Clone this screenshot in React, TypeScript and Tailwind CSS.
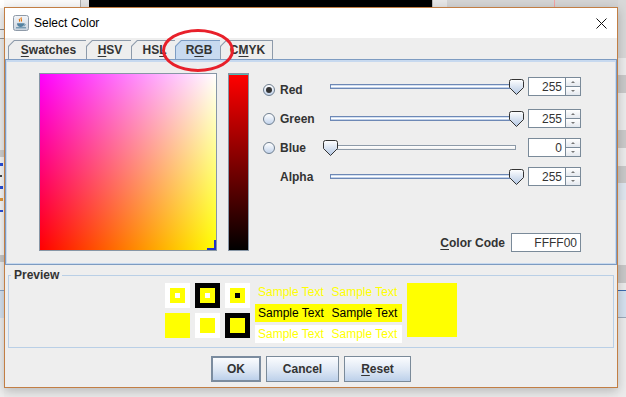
import React from 'react';

type Channel = { label: string; value: number; radio: boolean; checked?: boolean; gap: string; lift?: boolean };

const channels: Channel[] = [
  { label: 'Red', value: 255, radio: true, checked: true, gap: '', lift: true },
  { label: 'Green', value: 255, radio: true, gap: 'mt-[13px]' },
  { label: 'Blue', value: 0, radio: true, gap: 'mt-[10px]' },
  { label: 'Alpha', value: 255, radio: false, gap: 'mt-[10px]' },
];

const tabs = [
  { pre: '', key: 'S', post: 'watches', width: 'w-[78px]' },
  { pre: '', key: 'H', post: 'SV', width: 'w-[45px]' },
  { pre: 'HS', key: 'L', post: '', width: 'w-[44px]' },
  { pre: 'R', key: 'G', post: 'B', width: 'w-[45px]', active: true },
  { pre: 'C', key: 'M', post: 'YK', width: 'w-[53px]', last: true },
];

const TRACK = 186;

function JavaIcon() {
  return (
    <svg width="16" height="16" viewBox="0 0 16 16">
      <defs>
        <linearGradient id="ji" x1="0" y1="0" x2="0" y2="1">
          <stop offset="0" stopColor="#f4f6f9" />
          <stop offset="1" stopColor="#c9d2dd" />
        </linearGradient>
      </defs>
      <rect x="0.5" y="0.5" width="15" height="15" rx="2" fill="url(#ji)" stroke="#8e9aa8" />
      <path d="M8.5 2.5c-2 1.5 1.5 2.2-0.5 4M6.6 3.8c-1.2 1 1 1.4-0.3 2.7" stroke="#e76f00" strokeWidth="1.1" fill="none" />
      <path d="M4 8.2h7.2c0 2.6-1.4 3.8-3.6 3.8S4 10.8 4 8.2z" fill="#5382a1" />
      <path d="M11 8.8c1.6 0 1.6 2-0.4 2.2" stroke="#5382a1" strokeWidth="0.9" fill="none" />
      <path d="M3 12.8h10" stroke="#5382a1" strokeWidth="1" />
    </svg>
  );
}

function CloseGlyph() {
  return (
    <svg width="11" height="11" viewBox="0 0 11 11">
      <path d="M0.5 0.5L10.5 10.5M10.5 0.5L0.5 10.5" stroke="#111" strokeWidth="1" />
    </svg>
  );
}

function Thumb() {
  return (
    <svg width="15" height="16" viewBox="0 0 15 16">
      <defs>
        <linearGradient id="th" x1="0" y1="0" x2="0" y2="1">
          <stop offset="0" stopColor="#ffffff" />
          <stop offset="1" stopColor="#b3c7e3" />
        </linearGradient>
      </defs>
      <path d="M0.5 2.5Q0.5 0.5 2.5 0.5H12.5Q14.5 0.5 14.5 2.5V8.5L7.5 15.5L0.5 8.5Z" fill="url(#th)" stroke="#333" />
    </svg>
  );
}

function Radio({ checked }: { checked?: boolean }) {
  return (
    <div className="w-[12px] h-[12px] rounded-full border border-[#6f7f90] bg-[linear-gradient(#ffffff,#c3d4ec)] flex items-center justify-center">
      {checked && <div className="w-[6px] h-[6px] rounded-full bg-[#333333]" />}
    </div>
  );
}

function Slider({ value }: { value: number }) {
  const filled = value > 0;
  return (
    <div className="relative w-[200px] h-[19px]">
      <div
        className={`absolute left-[7px] right-[7px] top-[7px] h-[5px] border ${
          filled
            ? 'border-[#6d88b5] bg-[linear-gradient(#bcd0ec,#ffffff_50%,#9fb8de)]'
            : 'border-[#8d9aa8] bg-[linear-gradient(#ffffff,#f1f1f1)]'
        }`}
      />
      <div className="absolute top-[2px]" style={{ left: Math.round((value / 255) * TRACK) }}>
        <Thumb />
      </div>
    </div>
  );
}

function Spinner({ value }: { value: number }) {
  return (
    <div className="flex h-[19px]">
      <div className="w-[38px] h-full border border-[#7a8a99] bg-white flex items-center justify-end pr-[3px] text-[12px] text-[#333333]">
        {value}
      </div>
      <div className="w-[15px] h-full flex flex-col">
        <div className="h-[10px] border-y border-r border-[#7a8a99] bg-[linear-gradient(#ffffff,#e4e8ee)] flex items-center justify-center">
          <div className="w-0 h-0 border-x-[2px] border-x-transparent border-b-[2px] border-b-[#777777]" />
        </div>
        <div className="h-[9px] border-b border-r border-[#7a8a99] bg-[linear-gradient(#ffffff,#e4e8ee)] flex items-center justify-center">
          <div className="w-0 h-0 border-x-[2px] border-x-transparent border-t-[2px] border-t-[#777777]" />
        </div>
      </div>
    </div>
  );
}

function SampleRow({ tone }: { tone: 'plain' | 'fill' | 'white' }) {
  const cls =
    tone === 'fill'
      ? 'bg-[#ffff00] text-black'
      : tone === 'white'
        ? 'bg-white text-[#ffff00]'
        : 'text-[#ffff00]';
  return (
    <div className={`flex h-[18px] items-center text-[12px] ${cls}`}>
      <span className="w-[73.5px] px-[3px] whitespace-nowrap">Sample Text</span>
      <span className="w-[73.5px] px-[3px] whitespace-nowrap">Sample Text</span>
    </div>
  );
}

function Swatch({ outer, inner, dot }: { outer: string; inner?: string; dot?: string }) {
  return (
    <div className={`w-[25px] h-[25px] flex items-center justify-center ${outer}`}>
      {inner && (
        <div className={`w-[15px] h-[15px] flex items-center justify-center ${inner}`}>
          {dot && <div className={`w-[5px] h-[5px] ${dot}`} />}
        </div>
      )}
    </div>
  );
}

function Button({ label, mnemonic, width, primary }: { label: string; mnemonic?: number; width: string; primary?: boolean }) {
  return (
    <button
      className={`${width} h-[26px] flex items-center justify-center text-[12px] font-bold text-[#333333] bg-[linear-gradient(#fbfcfe,#dde7f4_55%,#bcd0ea)] ${
        primary ? 'border-2 border-[#7b8c9f]' : 'border border-[#7a8a99]'
      }`}
    >
      {mnemonic === undefined ? (
        label
      ) : (
        <span>
          <span className="underline underline-offset-2">{label[mnemonic]}</span>
          {label.slice(mnemonic + 1)}
        </span>
      )}
    </button>
  );
}

function Desktop() {
  return (
    <>
      {/* top strip */}
      <div className="absolute left-0 top-0 w-[80px] h-[8px] bg-[#fafafa]" />
      <div className="absolute left-[80px] top-0 w-[1px] h-[8px] bg-[#a8a8a8]" />
      <div className="absolute left-[81px] top-0 w-[8px] h-[8px] bg-[#e2e2e2]" />
      <div className="absolute left-[89px] top-0 w-[343px] h-[8px] bg-black" />
      <div className="absolute left-[432px] top-0 w-[15px] h-[8px] bg-[#e6e6e6] border-l border-[#b8b8b8]" />
      <div className="absolute left-[447px] top-0 right-0 h-[8px] bg-[#d4d4d4]" />
      <div className="absolute left-[554px] top-0 w-[1px] h-[8px] bg-[#f3a3a3]" />
      {/* right strip */}
      <div className="absolute left-[618px] top-0 right-0 h-[397px] flex flex-col">
        <div className="h-[58px] bg-[#d8d8d8]" />
        <div className="h-[17px] bg-[#ececec]" />
        <div className="h-[18px] bg-[#c9c9c9]" />
        <div className="h-[37px] bg-[#ececec]" />
        <div className="h-[18px] bg-[#cacaca]" />
        <div className="h-[18px] bg-[#ececec]" />
        <div className="h-[17px] bg-[#c9c9c9]" />
        <div className="h-[17px] bg-[#dfe7f0]" />
        <div className="h-[65px] bg-[#ececec]" />
        <div className="h-[18px] bg-[#c8c8c8]" />
        <div className="h-[7px] bg-[#ececec]" />
        <div className="h-[28px] bg-[#d4e1ef] border-t border-[#3d6cb0] border-b border-b-[#9aa9ba]" />
        <div className="flex-1 bg-[#ececec]" />
      </div>
      {/* left strip */}
      <div className="absolute left-0 top-0 w-[4px] h-[397px] flex flex-col">
        <div className="h-[8px] bg-white" />
        <div className="h-[21px] bg-[#f2f2f2]" />
        <div className="h-[1px] bg-[#8a8a8a]" />
        <div className="h-[8px] bg-[#f4f4f4]" />
        <div className="h-[1px] bg-[#9a9a9a]" />
        <div className="h-[111px] bg-[#eeeeee]" />
        <div className="h-[7px] bg-[#cfcfcf]" />
        <div className="h-[98px] bg-[#f7f7f7] flex flex-col gap-[9px] pt-[6px]">
          <div className="h-[3px] w-[3px] bg-[#2a4fd8]" />
          <div className="h-[2px] w-[2px] bg-[#444]" />
          <div className="h-[3px] w-[3px] bg-[#2a4fd8]" />
          <div className="h-[3px] w-[3px] bg-[#e49a3a]" />
          <div className="h-[2px] w-[3px] bg-[#2a4fd8]" />
        </div>
        <div className="h-[7px] bg-[#c9c9c9]" />
        <div className="h-[28px] bg-[#eeeeee]" />
        <div className="h-[28px] bg-[#d4e1ef] border-t border-[#8aa6c8]" />
        <div className="flex-1 bg-[#eeeeee]" />
      </div>
      {/* bottom strip */}
      <div className="absolute left-[4px] right-[8px] top-[388px] h-[9px] bg-[#ebebeb]" />
    </>
  );
}

export default function App() {
  return (
    <div className="relative w-[626px] h-[397px] overflow-hidden bg-[#eeeeee] font-['Liberation_Sans',Arial,sans-serif]">
      <Desktop />

      <div className="absolute left-[4px] top-[7px] w-[614px] h-[381px] border border-[#c27e44] bg-[#eeeeee] shadow-[0_3px_10px_rgba(0,0,0,0.22)] flex flex-col">
        {/* title bar */}
        <div className="h-[30px] bg-white flex items-center pl-[8px] pr-[10px]">
          <JavaIcon />
          <span className="ml-[5px] text-[12px] text-black">Select Color</span>
          <div className="ml-auto">
            <CloseGlyph />
          </div>
        </div>

        {/* tabs */}
        <div className="mt-[2px] ml-[3px] flex h-[19px]">
          {tabs.map((t) => (
            <div
              key={t.key}
              className={`${t.width} h-[19px] pt-[1px] pl-[1px] ${t.last ? 'pr-[1px]' : ''} [clip-path:polygon(6px_0,100%_0,100%_100%,0_100%,0_6px)] ${
                t.active ? 'bg-[#7d9cc3]' : 'bg-[#8d9aaa]'
              }`}
            >
              <div
                className={`h-full flex items-center justify-center text-[12px] font-bold text-[#333333] [clip-path:polygon(5.5px_0,100%_0,100%_100%,0_100%,0_5.5px)] ${
                  t.active ? 'bg-[#c8daf0]' : 'bg-[#eeeeee]'
                }`}
              >
                <span className="pl-[2px]">
                  {t.pre}
                  <span className="underline underline-offset-2">{t.key}</span>
                  {t.post}
                </span>
              </div>
            </div>
          ))}
        </div>

        {/* RGB panel */}
        <div className="h-[206px] border border-[#7d9bc1]">
          <div className="h-full border-x border-b border-t-2 border-[#c7d9ef] flex items-start pl-[32px]">
            <div className="mt-[11px] w-[178px] h-[178px] border border-[#8796a6] p-0">
              <div className="relative w-full h-full bg-[#ff0000] [background-image:linear-gradient(to_right,#000000,#00ff00),linear-gradient(to_bottom,#0000ff,#000000)] bg-blend-screen">
                <div className="absolute right-0 bottom-0 w-[9px] h-[10px] border-r-2 border-b-2 border-[#2233c4]" />
              </div>
            </div>
            <div className="mt-[11px] ml-[11px] w-[21px] h-[178px] border border-[#8796a6]">
              <div className="h-full bg-[linear-gradient(#ff0000,#000000)] border-t border-[#4fb8b4]" />
            </div>

            <div className="mt-[15px] ml-[14px] w-[318px] flex flex-col">
              {channels.map((c) => (
                <div key={c.label} className={`flex items-center h-[19px] ${c.gap}`}>
                  <div className={`flex items-center ${c.lift ? 'translate-y-[3px]' : ''}`}>
                    {c.radio ? <Radio checked={c.checked} /> : <div className="w-[12px]" />}
                    <span className="ml-[5px] w-[43px] text-[12px] font-bold text-[#333333]">{c.label}</span>
                  </div>
                  <Slider value={c.value} />
                  <div className="ml-[5px]">
                    <Spinner value={c.value} />
                  </div>
                </div>
              ))}
              <div className="mt-[47px] flex items-center justify-end">
                <span className="text-[12px] font-bold text-[#333333]">
                  <span className="underline underline-offset-2">C</span>olor Code
                </span>
                <div className="ml-[6px] w-[70px] h-[19px] border border-[#7a8a99] bg-white flex items-center justify-end pr-[3px] text-[12px] text-[#333333]">
                  FFFF00
                </div>
              </div>
            </div>
          </div>
        </div>

        {/* preview */}
        <fieldset className="mt-[3px] mx-[3px] border border-[#b9cfe6] px-0 pt-[1px] pb-[4px] m-0">
          <legend className="ml-[2px] px-[3px] text-[12px] leading-[14px] font-bold text-[#333333]">Preview</legend>
          <div className="flex justify-center items-start">
            <div className="grid grid-cols-3 gap-[5px]">
              <Swatch outer="bg-white" inner="bg-[#ffff00]" dot="bg-white" />
              <Swatch outer="bg-black" inner="bg-[#ffff00]" dot="bg-white" />
              <Swatch outer="bg-white" inner="bg-[#ffff00]" dot="bg-black" />
              <Swatch outer="bg-[#ffff00]" />
              <Swatch outer="bg-white" inner="bg-[#ffff00]" />
              <Swatch outer="bg-black" inner="bg-[#ffff00]" />
            </div>
            <div className="ml-[5px] w-[147px] flex flex-col gap-[3px]">
              <SampleRow tone="plain" />
              <SampleRow tone="fill" />
              <SampleRow tone="white" />
            </div>
            <div className="ml-[5px] w-[50px] h-[54px] bg-[#ffff00]" />
          </div>
        </fieldset>

        {/* buttons */}
        <div className="mt-[8px] flex justify-center gap-[5px]">
          <Button label="OK" width="w-[50px]" primary />
          <Button label="Cancel" width="w-[73px]" />
          <Button label="Reset" mnemonic={0} width="w-[67px]" />
        </div>
      </div>

      {/* red annotation circle */}
      <div className="absolute left-[162px] top-[29px] w-[72px] h-[43px] rounded-[50%] border-[3px] border-[#e8202a]" />
    </div>
  );
}
